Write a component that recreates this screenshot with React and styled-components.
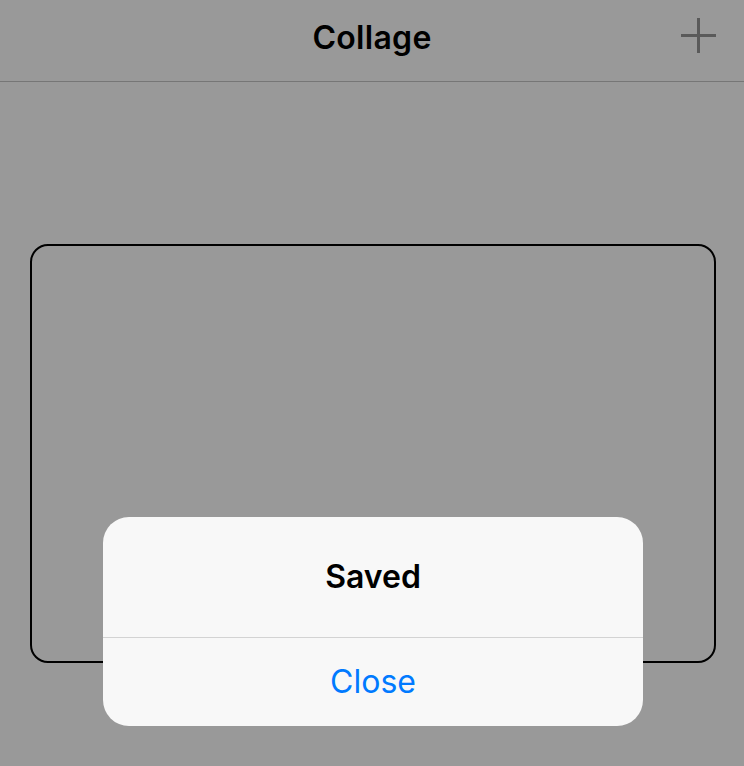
import React from 'react';
import styled, { createGlobalStyle } from 'styled-components';

const GlobalStyle = createGlobalStyle`
  html, body {
    margin: 0;
    padding: 0;
    background: #999999;
    font-family: Inter, "Liberation Sans", sans-serif;
  }
`;

const Page = styled.div`
  position: relative;
  width: 744px;
  height: 766px;
  background: #999999;
  display: flex;
  flex-direction: column;
  overflow: hidden;
`;

const Header = styled.header`
  height: 82px;
  border-bottom: 1px solid #767676;
  display: flex;
  align-items: center;
  justify-content: center;
  position: relative;
  padding-bottom: 6px;
  box-sizing: border-box;
`;

const Title = styled.h1`
  margin: 0;
  font-size: 32px;
  font-weight: 600;
  color: #000;
  letter-spacing: 0.3px;
`;

const AddButton = styled.button`
  position: absolute;
  right: 27px;
  top: 17px;
  width: 37px;
  height: 37px;
  padding: 0;
  border: none;
  background: none;
  display: flex;
  align-items: center;
  justify-content: center;
  cursor: pointer;
`;

const Content = styled.main`
  flex: 1;
  padding: 162px 28px 0 30px;
`;

const Canvas = styled.div`
  height: 419px;
  border: 2px solid #000;
  border-radius: 18px;
  box-sizing: border-box;
`;

const Alert = styled.div`
  position: absolute;
  left: 103px;
  top: 517px;
  width: 540px;
  height: 209px;
  background: #f8f8f8;
  border-radius: 26px;
  display: flex;
  flex-direction: column;
  overflow: hidden;
`;

const AlertBody = styled.div`
  height: 121px;
  display: flex;
  align-items: center;
  justify-content: center;
  padding-bottom: 2px;
  box-sizing: border-box;
  border-bottom: 1px solid #d3d3d3;
`;

const AlertTitle = styled.div`
  font-size: 32px;
  font-weight: 600;
  color: #000;
`;

const AlertAction = styled.button`
  flex: 1;
  border: none;
  background: none;
  font-family: inherit;
  font-size: 32px;
  font-weight: 400;
  color: #007aff;
  cursor: pointer;
  padding: 0 0 2px;
`;

const App = () => {
    return (
        <Page>
            <GlobalStyle />
            <Header>
                <Title>Collage</Title>
                <AddButton aria-label="add">
                    <svg width="37" height="37" viewBox="0 0 37 37">
                        <path d="M18.5 1v35M1 18.5h35" stroke="#5a5a5a" strokeWidth="3" />
                    </svg>
                </AddButton>
            </Header>
            <Content>
                <Canvas />
            </Content>
            <Alert>
                <AlertBody>
                    <AlertTitle>Saved</AlertTitle>
                </AlertBody>
                <AlertAction>Close</AlertAction>
            </Alert>
        </Page>
    );
};

export default App;
